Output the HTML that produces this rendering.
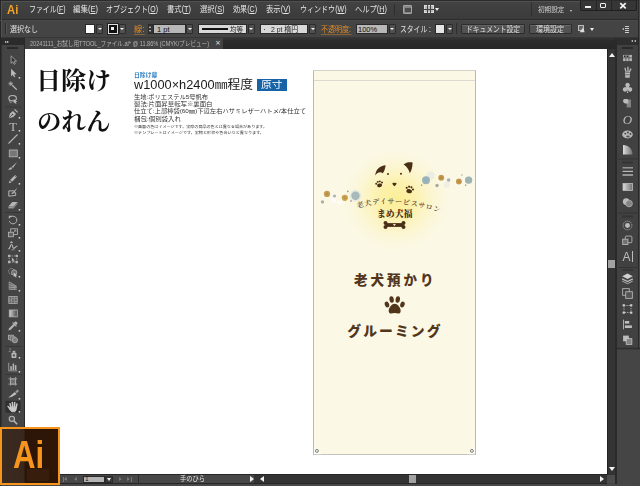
<!DOCTYPE html>
<html lang="ja">
<head>
<meta charset="utf-8">
<title>Illustrator</title>
<style>
*{margin:0;padding:0;box-sizing:border-box}
html,body{width:640px;height:486px;overflow:hidden;background:#454545}
body{position:relative;font-family:"Liberation Sans","Noto Sans CJK JP",sans-serif;color:#ddd}
.a{position:absolute}
.t{position:absolute;white-space:nowrap;line-height:1}
#menubar{left:0;top:0;width:640px;height:20px;background:linear-gradient(#434343,#3b3b3b);border-bottom:1px solid #2b2b2b}
#ctrl{left:0;top:20px;width:640px;height:18px;background:#444}
#strip{left:0;top:36.5px;width:640px;height:12.5px;background:linear-gradient(#383838,#2c2c2c 30%,#272727)}
#tab{left:25px;top:38px;width:198px;height:11px;background:#424242}
#tools{left:0;top:38px;width:25px;height:448px;background:#444;border-right:1px solid #282828;border-left:2px solid #323232}
#toolshead{left:0;top:38px;width:24px;height:7px;background:#2b2b2b}
#canvas{left:25px;top:49px;width:582px;height:425px;background:#fff}
#vscroll{left:606.5px;top:49px;width:8.5px;height:426px;background:#343434;border-left:1px solid #222}
#gap{left:615px;top:38px;width:2px;height:448px;background:#2a2a2a}
#rpanel{left:617px;top:38px;width:23px;height:448px;background:#414141}
#rhead{left:617px;top:38px;width:23px;height:7px;background:#2e2e2e}
#status{left:60px;top:474px;width:547px;height:10px;background:#333;border-top:1px solid #262626;border-bottom:1px solid #262626}
#bottom{left:0;top:484px;width:640px;height:2px;background:#484848}
.mi{top:5px;font-size:8.5px;color:#e6e6e6}
.ci{font-size:8.3px;color:#e2e2e2}
.dd{position:absolute;width:7px;height:10.5px;top:23.5px;background:#505050;border:1px solid #2c2c2c;border-radius:1px}
.dd:after{content:"";position:absolute;left:0.5px;top:3.2px;border-left:2px solid transparent;border-right:2px solid transparent;border-top:2.6px solid #f4f4f4}
.fld{position:absolute;top:24px;height:10px;background:#d8d8d8;border:1px solid #2a2a2a}
.btn{position:absolute;top:24px;height:10px;background:#525252;border:1px solid #2c2c2c;border-radius:1px;box-shadow:inset 0 1px 0 #666}
.or{color:#e08a28;border-bottom:1px solid rgba(224,138,40,.45)}
.inf{font-size:5.7px;color:#2e2e2e}
.inf2{font-size:3.7px;color:#2e2e2e}
</style>
</head>
<body>
<div class="a" id="menubar"></div>
<div class="a" id="ctrl"></div>
<div class="a" id="strip"></div>
<div class="a" id="tab"></div>
<div class="a" id="canvas"></div>
<div class="a" id="tools"></div>
<div class="a" id="toolshead"></div>
<div class="a" id="vscroll"></div>
<div class="a" id="gap"></div>
<div class="a" id="rpanel"></div>
<div class="a" id="rhead"></div>
<div class="a" id="status"></div>
<div class="a" id="bottom"></div>

<!-- MENU -->
<div class="t" style="transform:scaleX(0.869);transform-origin:0 0;left:6.8px;top:3px;font-size:13px;font-weight:bold;color:#f3a326">Ai</div>
<div class="t mi" style="transform:scaleX(0.813);transform-origin:0 0;left:28.5px">ファイル(<u>F</u>)</div>
<div class="t mi" style="transform:scaleX(0.882);transform-origin:0 0;left:73px">編集(<u>E</u>)</div>
<div class="t mi" style="transform:scaleX(0.821);transform-origin:0 0;left:106px">オブジェクト(<u>O</u>)</div>
<div class="t mi" style="transform:scaleX(0.861);transform-origin:0 0;left:167px">書式(<u>T</u>)</div>
<div class="t mi" style="transform:scaleX(0.864);transform-origin:0 0;left:200px">選択(<u>S</u>)</div>
<div class="t mi" style="transform:scaleX(0.833);transform-origin:0 0;left:233px">効果(<u>C</u>)</div>
<div class="t mi" style="transform:scaleX(0.864);transform-origin:0 0;left:265.5px">表示(<u>V</u>)</div>
<div class="t mi" style="transform:scaleX(0.827);transform-origin:0 0;left:299.5px">ウィンドウ(<u>W</u>)</div>
<div class="t mi" style="transform:scaleX(0.857);transform-origin:0 0;left:355px">ヘルプ(<u>H</u>)</div>
<div class="a" style="left:394px;top:4px;width:1px;height:11px;background:#2e2e2e"></div>
<div class="a" style="left:403px;top:5px;width:9px;height:8.5px;background:#858585;border:1px solid #a4a4a4;border-radius:1px"></div>
<div class="a" style="left:404.5px;top:7.5px;width:6px;height:4.5px;background:#4c4c4c"></div>
<div class="a" style="left:424px;top:5px;width:10px;height:8px;background:#bbb;border:1px solid #ddd"></div>
<div class="a" style="left:427px;top:5px;width:1px;height:8px;background:#444"></div>
<div class="a" style="left:430px;top:5px;width:1px;height:8px;background:#444"></div>
<div class="a" style="left:424px;top:9px;width:10px;height:1px;background:#444"></div>
<div class="a" style="left:435px;top:8px;border-left:2px solid transparent;border-right:2px solid transparent;border-top:3px solid #eee"></div>
<div class="t" style="transform:scaleX(0.946);transform-origin:0 0;left:538px;top:6px;font-size:7px;color:#ccc">初期設定</div>
<div class="a" style="left:569.5px;top:10px;border-left:1.5px solid transparent;border-right:1.5px solid transparent;border-top:2.5px solid #ccc"></div>
<div class="a" style="left:580px;top:0;width:57px;height:10.5px;background:#363636;border:1px solid #1f1f1f;border-top:none;border-radius:0 0 2.5px 2.5px"></div>
<div class="a" style="left:595.5px;top:0;width:1px;height:10px;background:#232323"></div>
<div class="a" style="left:610.5px;top:0;width:1px;height:10px;background:#232323"></div>
<div class="a" style="left:585.3px;top:6px;width:5.5px;height:2px;background:#f0f0f0"></div>
<div class="a" style="left:600px;top:3.3px;width:6px;height:4.7px;border:1.3px solid #f0f0f0;border-top-width:1.8px;border-radius:1px"></div>
<svg class="a" style="left:619px;top:2px" width="8" height="8" viewBox="0 0 8 8"><path d="M1.300 1.200L6.700 6.300M6.700 1.200L1.300 6.300" stroke="#f4f4f4" stroke-width="1.700"/></svg>
<!-- window border -->
<div class="a" style="left:0;top:0;width:640px;height:1px;background:#2b2b2b"></div>
<div class="a" style="left:0;top:1px;width:580px;height:1px;background:#505050"></div>
<div class="a" style="left:0;top:0;width:1px;height:486px;background:#262626"></div>
<div class="a" style="left:1px;top:1px;width:1px;height:36px;background:#525252"></div>
<div class="a" style="left:637.5px;top:0;width:1.5px;height:486px;background:#2a2a2a"></div>
<div class="a" style="left:639px;top:0;width:1px;height:486px;background:#4a4a4a"></div>
<div class="a" style="left:0;top:20px;width:637px;height:1px;background:#4a4a4a"></div>

<!-- CONTROL BAR -->
<div class="a" style="left:5px;top:23px;width:2px;height:11px;background:#2c2c2c;border-right:1px solid #555"></div>
<div class="t ci" style="transform:scaleX(0.843);transform-origin:0 0;left:10px;top:25.3px">選択なし</div>
<div class="a" style="left:85px;top:23.5px;width:10px;height:10px;background:#fff;border:1px solid #2a2a2a"></div>
<div class="dd" style="left:96px"></div>
<div class="a" style="left:107.5px;top:23.5px;width:10px;height:10px;background:#111;border:1px solid #ddd;outline:1px solid #222"></div>
<div class="a" style="left:110px;top:26px;width:5px;height:5px;background:#eee;border:1px solid #111"></div>
<div class="dd" style="left:118.5px"></div>
<div class="t ci or" style="transform:scaleX(0.990);transform-origin:0 0;left:134px;top:25.3px">線:</div>
<div class="a" style="left:147.5px;top:24px;width:6px;height:10px;background:#333;border:1px solid #2a2a2a"></div>
<div class="a" style="left:149px;top:25.5px;border-left:1.5px solid transparent;border-right:1.5px solid transparent;border-bottom:2.5px solid #ddd"></div>
<div class="a" style="left:149px;top:30px;border-left:1.5px solid transparent;border-right:1.5px solid transparent;border-top:2.5px solid #ddd"></div>
<div class="fld" style="left:153px;width:33px;background:#b8b8b8"></div>
<div class="t" style="left:157px;top:25.5px;font-size:7.5px;color:#111">1 pt</div>
<div class="dd" style="left:186px"></div>
<div class="fld" style="left:197.5px;width:49px"></div>
<div class="a" style="left:202px;top:28px;width:26px;height:1.5px;background:#111"></div>
<div class="t" style="transform:scaleX(0.929);transform-origin:0 0;left:230px;top:25.5px;font-size:7px;color:#222">均等</div>
<div class="dd" style="left:247.5px"></div>
<div class="fld" style="left:260px;width:48px"></div>
<div class="a" style="left:263.5px;top:28.5px;width:1.5px;height:1.5px;background:#222;border-radius:1px"></div>
<div class="t" style="transform:scaleX(0.912);transform-origin:0 0;left:271px;top:25.5px;font-size:7.5px;color:#222">2 pt 楕円</div>
<div class="dd" style="left:309px"></div>
<div class="t ci or" style="transform:scaleX(0.845);transform-origin:0 0;left:321px;top:25.3px">不透明度:</div>
<div class="fld" style="left:355.5px;width:32.5px;background:#b8b8b8"></div>
<div class="t" style="left:358px;top:25.5px;font-size:7.5px;color:#111">100%</div>
<div class="dd" style="left:388.5px"></div>
<div class="t ci" style="transform:scaleX(0.820);transform-origin:0 0;left:399.5px;top:25.3px">スタイル :</div>
<div class="a" style="left:435px;top:23.5px;width:10px;height:10px;background:#e6e6e6;border:1px solid #2a2a2a"></div>
<div class="dd" style="left:446px"></div>
<div class="btn" style="left:461px;width:63.5px"></div>
<div class="a" style="left:456px;top:23px;width:1px;height:11px;background:#2e2e2e"></div>
<div class="a" style="left:531px;top:2px;width:1px;height:14px;background:#303030"></div>
<div class="t ci" style="transform:scaleX(0.813);transform-origin:0 0;left:465.5px;top:25.3px;color:#ddd">ドキュメント設定</div>
<div class="btn" style="left:528.5px;width:43px"></div>
<div class="t ci" style="transform:scaleX(0.843);transform-origin:0 0;left:536px;top:25.3px;color:#ddd">環境設定</div>
<div class="a" style="left:578px;top:25px;width:6px;height:6px;border:1px solid #bbb;background:#666"></div>
<div class="a" style="left:581px;top:28px;border-top:3px solid transparent;border-bottom:3px solid transparent;border-left:4px solid #ddd;transform:rotate(35deg)"></div>
<div class="a" style="left:590px;top:28px;border-left:2px solid transparent;border-right:2px solid transparent;border-top:3px solid #eee"></div>
<div class="a" style="left:621.5px;top:28px;border-top:1.5px solid transparent;border-bottom:1.5px solid transparent;border-right:2.5px solid #ccc"></div>
<div class="a" style="left:625px;top:26px;width:4px;height:1px;background:#ccc;box-shadow:0 2px 0 #ccc,0 4px 0 #ccc,0 6px 0 #ccc"></div>

<!-- TAB -->
<div class="t" style="transform:scaleX(0.858);transform-origin:0 0;left:30px;top:40.5px;font-size:6.5px;color:#b4b4b4;filter:blur(0.3px)">20241111_お試し用TTOOL_ファイル.ai* @ 11.86% (CMYK/プレビュー)</div>
<div class="t" style="left:215px;top:40px;font-size:7px;color:#e6e6e6;font-family:'DejaVu Sans',sans-serif">×</div>
<div class="a" style="left:4.5px;top:40.5px;border-top:1.5px solid transparent;border-bottom:1.5px solid transparent;border-left:2px solid #ddd"></div>
<div class="a" style="left:7px;top:40.5px;border-top:1.5px solid transparent;border-bottom:1.5px solid transparent;border-left:2px solid #ddd"></div>
<div class="a" style="left:7px;top:47px;width:11px;height:2px;background:#2a2a2a"></div>
<div class="a" style="left:634px;top:40px;border-top:1.5px solid transparent;border-bottom:1.5px solid transparent;border-right:2px solid #ddd"></div>
<div class="a" style="left:631px;top:40px;border-top:1.5px solid transparent;border-bottom:1.5px solid transparent;border-right:2px solid #ddd"></div>
<div class="a" style="left:622px;top:47px;width:11px;height:2px;background:#2a2a2a"></div>

<!-- ARTBOARD -->
<div class="a" id="banner" style="left:313px;top:70px;width:162.5px;height:385.3px;background:#fbf8e5;border:1px solid #b9b9b4;border-top-color:#d2d2c8;border-bottom-color:#c4c4be"></div>
<div class="a" style="left:314px;top:80px;width:161px;height:1px;background:#dcdad0"></div>

<svg class="a" style="left:300px;top:60px" width="200" height="400" viewBox="300 60 200 400">
<defs>
<radialGradient id="glow" cx="0.5" cy="0.5" r="0.5"><stop offset="0" stop-color="#fcee96"/><stop offset="0.3" stop-color="#fcf0a4" stop-opacity="0.9"/><stop offset="0.6" stop-color="#fcf3bc" stop-opacity="0.5"/><stop offset="0.85" stop-color="#fbf6d4" stop-opacity="0.15"/><stop offset="1" stop-color="#fbf8e5" stop-opacity="0"/></radialGradient>
<path id="arc" d="M357.500,208.200 Q392,197.600 440.500,212.800"/>
</defs>
<ellipse cx="396" cy="200" rx="60" ry="56" fill="url(#glow)"/>
<!-- bubbles left -->
<circle cx="355.500" cy="195.800" r="6" fill="#e3e8e1" opacity="0.8"/>
<circle cx="333.700" cy="200" r="2.600" fill="#fff" opacity="0.7"/>
<circle cx="340" cy="202.500" r="2.200" fill="#fff" opacity="0.6"/>
<circle cx="327" cy="193.900" r="3.100" fill="#c49c55"/><circle cx="327" cy="193.900" r="1.400" fill="#b88f49"/>
<circle cx="334.500" cy="196" r="1.600" fill="#a9b5b3"/>
<circle cx="322.500" cy="201.900" r="1.600" fill="#a8aaa0"/>
<circle cx="344.800" cy="197.800" r="3.100" fill="#c9a24f"/><circle cx="344.800" cy="197.800" r="1.400" fill="#bd9444"/>
<circle cx="347.800" cy="191.400" r="0.900" fill="#9d9da4"/>
<circle cx="355.500" cy="195.800" r="4.200" fill="#a7b9b8"/>
<circle cx="351" cy="201" r="0.800" fill="#8d7f72"/>
<!-- bubbles right -->
<circle cx="430.500" cy="175.500" r="4" fill="#e6ebe6" opacity="0.8"/>
<circle cx="446.900" cy="184.800" r="3" fill="#ecece4" opacity="0.8"/>
<circle cx="426" cy="180.200" r="4" fill="#9db3b8"/><circle cx="426" cy="180.200" r="1.800" fill="#8fb0bd"/>
<circle cx="441.200" cy="177.800" r="3.700" fill="#fff" opacity="0.7"/><circle cx="441.200" cy="177.800" r="3" fill="#c59a4a"/><circle cx="441.200" cy="177.800" r="1.400" fill="#b98a3e"/>
<circle cx="437" cy="185.500" r="1.700" fill="#a8a89c"/>
<circle cx="448.600" cy="180" r="1.800" fill="#a9b0b0"/>
<circle cx="458.900" cy="181.600" r="3.800" fill="#fff" opacity="0.7"/><circle cx="458.900" cy="181.600" r="3" fill="#c79a4c"/><circle cx="458.900" cy="181.600" r="1.400" fill="#ba8c40"/>
<circle cx="468.600" cy="180.200" r="3.600" fill="#9eb3b6"/>
<circle cx="461.900" cy="175" r="0.800" fill="#a9a3ad"/>
<circle cx="421.600" cy="185.100" r="0.700" fill="#6b6256"/>
<circle cx="465.600" cy="185.100" r="0.700" fill="#6b6256"/>
<!-- dog -->
<g fill="#4a2f17">
<path d="M375.200,175.400 C375.800,169.300 380,165.800 385.600,165.300 C385.200,169 384.200,171.500 382.800,173.300 C380.300,171.300 377.500,172.300 375.200,175.400z"/>
<path d="M403.600,164.400 C406.500,162 409.800,161.800 412.600,162.600 C412.500,167.300 411.500,170.800 409.800,173.300 C409,169.700 407,166.700 403.600,164.400z"/>
<circle cx="388" cy="174" r="1"/><circle cx="401" cy="173.700" r="1"/>
<path d="M392.300,183 Q394.400,182.300 396.600,183 Q396.300,185.300 394.400,186.300 Q392.600,185.300 392.300,183z"/>
<!-- left paw -->
<g transform="translate(379.300,184) rotate(-12) scale(1.1)"><ellipse cx="0" cy="1.300" rx="2.300" ry="1.700"/><circle cx="-2.700" cy="-0.800" r="0.900"/><circle cx="-1" cy="-2.200" r="0.900"/><circle cx="1" cy="-2.200" r="0.900"/><circle cx="2.700" cy="-0.800" r="0.900"/></g>
<!-- right paw -->
<g transform="translate(409.600,189.600) rotate(15) scale(1.08)"><ellipse cx="0" cy="1.500" rx="2.600" ry="1.900"/><circle cx="-3" cy="-0.900" r="1"/><circle cx="-1.100" cy="-2.500" r="1"/><circle cx="1.100" cy="-2.500" r="1"/><circle cx="3" cy="-0.900" r="1"/></g>
<!-- bone -->
<rect x="385.500" y="223.100" width="18" height="3.800"/><circle cx="385.500" cy="223" r="2"/><circle cx="385.500" cy="227" r="2"/><circle cx="403.500" cy="223" r="2"/><circle cx="403.500" cy="227" r="2"/>
</g>
<path d="M394.400,226 l-1.200,-1.200 a0.650,0.650 0 0 1 1.200,-0.600 a0.650,0.650 0 0 1 1.200,0.600z" fill="#f6e9d8"/>
<text font-family="'Liberation Serif','Noto Serif CJK SC',serif" font-size="7.200" font-weight="600" fill="#5e4d3e"><textPath href="#arc" textLength="83.500" lengthAdjust="spacing">老犬デイサービスサロン</textPath></text>
<text x="376.900" y="217.300" font-family="'Liberation Serif','Noto Serif CJK SC',serif" font-weight="900" font-size="9" fill="#4a2f17" textLength="35.500" lengthAdjust="spacingAndGlyphs">まめ犬福</text>
<circle cx="402.300" cy="210.200" r="0.800" fill="#d8452e"/>
<text x="354" y="284.900" font-family="'Liberation Sans','Noto Sans CJK JP',sans-serif" font-weight="900" font-size="13.500" fill="#52361c" textLength="79.500" lengthAdjust="spacing">老犬預かり</text>
<text x="347.300" y="336.300" font-family="'Liberation Sans','Noto Sans CJK JP',sans-serif" font-weight="900" font-size="13.800" fill="#52361c" textLength="93.200" lengthAdjust="spacing">グルーミング</text>
<!-- big paw -->
<g fill="#52361c" transform="translate(394.700,305.600) scale(1.06,1.17)"><path d="M0,-1.500 C3,-1.500 6.500,3 5.500,5.500 C4.500,7.800 2,6.300 0,6.300 C-2,6.300 -4.500,7.800 -5.500,5.500 C-6.500,3 -3,-1.500 0,-1.500z"/><ellipse cx="-7.300" cy="-1" rx="2" ry="2.600" transform="rotate(-25 -7.300 -1)"/><ellipse cx="-2.900" cy="-5.200" rx="2.100" ry="2.800" transform="rotate(-8 -2.900 -5.200)"/><ellipse cx="2.900" cy="-5.200" rx="2.100" ry="2.800" transform="rotate(8 2.900 -5.200)"/><ellipse cx="7.300" cy="-1" rx="2" ry="2.600" transform="rotate(25 7.300 -1)"/></g>
<!-- grommets -->
<path d="M314,446 L322,454.300 L314,454.300z" fill="#fdfcf2" opacity="0.8"/><path d="M474.800,446 L466.800,454.300 L474.800,454.300z" fill="#fdfcf2" opacity="0.8"/>
<g fill="#e9e9e4" stroke="#858582" stroke-width="1"><circle cx="316.900" cy="450.900" r="1.500"/><circle cx="471.900" cy="450.900" r="1.500"/></g>
</svg>

<!-- TOP LEFT TEXT -->
<div class="t" style="transform:scaleX(1.043);transform-origin:0 0;left:36.2px;top:68.7px;font-size:24px;font-weight:bold;color:#111;font-family:'Liberation Serif','Noto Serif CJK SC',serif">日除け</div>
<div class="t" style="transform:scaleX(1.019);transform-origin:0 0;left:37.4px;top:110px;font-size:24px;font-weight:bold;color:#111;font-family:'Liberation Serif','Noto Serif CJK SC',serif">のれん</div>
<div class="t" style="transform:scaleX(1.132);transform-origin:0 0;left:134.3px;top:72.7px;font-size:5.2px;font-weight:bold;color:#2a7cc2">日除け幕</div>
<div class="t" style="transform:scaleX(1.039);transform-origin:0 0;left:134.3px;top:79.3px;font-size:12.3px;color:#1a1a1a">w1000×h2400㎜程度</div>
<div class="a" style="left:256.5px;top:79px;width:30.5px;height:11.5px;background:#1763a8"></div>
<div class="t" style="transform:scaleX(1.131);transform-origin:0 0;left:261px;top:80px;font-size:9.5px;color:#fff">原寸</div>
<div class="t inf" style="transform:scaleX(1.099);transform-origin:0 0;left:134px;top:95px">生地:ポリエステル5号帆布</div>
<div class="t inf" style="transform:scaleX(1.124);transform-origin:0 0;left:134px;top:102.3px">製法:片面昇華転写※裏面白</div>
<div class="t inf" style="transform:scaleX(1.106);transform-origin:0 0;left:134px;top:109.2px">仕立て:上部棒袋(60㎜)下辺左右ハサミレザーハトメ/本仕立て</div>
<div class="t inf" style="transform:scaleX(1.135);transform-origin:0 0;left:134px;top:116.8px">梱包:個別袋入れ</div>
<div class="t inf2" style="transform:scaleX(1.100);transform-origin:0 0;left:134px;top:126.2px">※画面の色はイメージです。実際の商品の色とは異なる場合があります。</div>
<div class="t inf2" style="transform:scaleX(1.110);transform-origin:0 0;left:134px;top:132.1px">※テンプレートはイメージです。実物と形状や色合いなど異なります。</div>

<!-- SCROLLBARS -->
<div class="a" style="left:608.5px;top:52.5px;border-left:3px solid transparent;border-right:3px solid transparent;border-bottom:4px solid #f2f2f2"></div>
<div class="a" style="left:608.5px;top:466.5px;border-left:3px solid transparent;border-right:3px solid transparent;border-top:4px solid #f2f2f2"></div>
<div class="a" style="left:607.5px;top:260px;width:7px;height:8px;background:#a2a2a2"></div>
<div class="a" style="left:607px;top:475px;width:8px;height:8px;background:#4c4c4c"></div>
<!-- STATUS -->
<div class="a" style="left:60px;top:475px;width:194px;height:8px;background:#474747"></div>
<div class="a" style="left:62.5px;top:476.5px;width:1px;height:5px;background:#777"></div>
<div class="a" style="left:64px;top:476.5px;border-top:2.5px solid transparent;border-bottom:2.5px solid transparent;border-right:3.5px solid #777"></div>
<div class="a" style="left:74px;top:476.5px;border-top:2.5px solid transparent;border-bottom:2.5px solid transparent;border-right:3.5px solid #777"></div>
<div class="a" style="left:83px;top:475.5px;width:22px;height:7.5px;background:#b4b4b4;border:1px solid #2a2a2a"></div>
<div class="t" style="left:85px;top:476px;font-size:6.5px;color:#111">1</div>
<div class="a" style="left:105px;top:475.5px;width:8px;height:7.5px;background:#3a3a3a;border:1px solid #2a2a2a"></div>
<div class="a" style="left:107px;top:478px;border-left:2px solid transparent;border-right:2px solid transparent;border-top:3px solid #eee"></div>
<div class="a" style="left:118.500px;top:476.5px;border-top:2.5px solid transparent;border-bottom:2.5px solid transparent;border-left:3.5px solid #777"></div>
<div class="a" style="left:127px;top:476.5px;border-top:2.5px solid transparent;border-bottom:2.5px solid transparent;border-left:3.5px solid #777"></div>
<div class="a" style="left:131px;top:476.5px;width:1px;height:5px;background:#777"></div>
<div class="a" style="left:137.5px;top:475px;width:1px;height:8px;background:#2e2e2e"></div>
<div class="t" style="transform:scaleX(0.920);transform-origin:0 0;left:179.5px;top:475.8px;font-size:6.8px;color:#e4e4e4">手のひら</div>
<div class="a" style="left:249.5px;top:476px;border-top:3px solid transparent;border-bottom:3px solid transparent;border-left:4px solid #f2f2f2"></div>
<div class="a" style="left:260px;top:476px;border-top:3px solid transparent;border-bottom:3px solid transparent;border-right:4px solid #f2f2f2"></div>
<div class="a" style="left:599.5px;top:476px;border-top:3px solid transparent;border-bottom:3px solid transparent;border-left:4px solid #f2f2f2"></div>
<div class="a" style="left:408.5px;top:475px;width:7.5px;height:8px;background:#a2a2a2"></div>
<svg class="a" style="left:0;top:0;opacity:.85" width="30" height="486" viewBox="0 0 30 486" fill="none" stroke="none">
<rect x="5.400" y="400.800" width="15.200" height="12" rx="1" fill="#2d2d2d"/>
<g fill="#f4f4f4">
<!-- corner dots -->
<rect x="18.700" y="77.05" width="1.500" height="1.500"/><rect x="18.700" y="117.05" width="1.500" height="1.500"/><rect x="18.700" y="143.05" width="1.500" height="1.500"/><rect x="18.700" y="157.05" width="1.500" height="1.500"/><rect x="18.700" y="183.05" width="1.500" height="1.500"/><rect x="18.700" y="209.05" width="1.500" height="1.500"/><rect x="18.700" y="224.05" width="1.500" height="1.500"/><rect x="18.700" y="237.05" width="1.500" height="1.500"/><rect x="18.700" y="250.05" width="1.500" height="1.500"/><rect x="18.700" y="276.05" width="1.500" height="1.500"/><rect x="18.700" y="290.05" width="1.500" height="1.500"/><rect x="18.700" y="330.05" width="1.500" height="1.500"/><rect x="18.700" y="357.05" width="1.500" height="1.500"/><rect x="18.700" y="371.05" width="1.500" height="1.500"/><rect x="18.700" y="398.05" width="1.500" height="1.500"/><rect x="18.700" y="411.05" width="1.500" height="1.500"/><rect x="18.700" y="130.05" width="1.500" height="1.500"/>
</g>
<!-- separators -->
<g fill="#363636"><rect x="5" y="106.5" width="17" height="1"/><rect x="5" y="212" width="17" height="1"/><rect x="5" y="346" width="17" height="1"/><rect x="5" y="374" width="17" height="1"/></g>
<!-- hand selected bg -->

<!-- 1 selection (hollow arrow) -->
<g transform="translate(13,60) scale(0.76)"><path d="M-2.5-5.5l0 10 2.3-2.2 1.6 3.4 1.6-.8-1.6-3.3 3.3-.1z" fill="#2f2f2f" stroke="#c9c9c9" stroke-width="1"/></g>
<!-- 2 direct selection (solid arrow) -->
<g transform="translate(13,73) scale(0.76)"><path d="M-2.5-5.5l0 10 2.3-2.2 1.6 3.4 1.6-.8-1.6-3.3 3.3-.1z" fill="#d2d2d2"/></g>
<!-- 3 magic wand -->
<g transform="translate(13,86) scale(0.76)" stroke="#c9c9c9"><path d="M-1-1l6 6" stroke-width="1.6"/><path d="M-3-6l0 6M-6-3l6 0M-5-5l4 4M-1-5l-4 4" stroke-width="1"/></g>
<!-- 4 lasso -->
<g transform="translate(13,99) scale(0.76)"><ellipse cx="-0.5" cy="-1" rx="5" ry="3.5" stroke="#c9c9c9" stroke-width="1.4"/><path d="M1 0l0 6 1.5-1.5 1.2 2 1-.5-1.1-2 2.2 0z" fill="#d2d2d2"/><path d="M-4 2c-1 2 0 3 2 3" stroke="#c9c9c9" stroke-width="1"/></g>
<!-- 5 pen -->
<g transform="translate(13,114) scale(0.76)"><path d="M-5.5 5.5l1.5-6 4-3.5 4 4-3.5 4z" fill="#c9c9c9"/><path d="M1.5-5.5l4 4 1.2-1.2-4-4z" fill="#c9c9c9"/><path d="M-5 5l4-4" stroke="#3a3a3a" stroke-width="0.9"/><circle cx="-0.6" cy="0.6" r="1" fill="#3a3a3a"/></g>
<!-- 6 type -->
<text x="13" y="130.5" font-family="Liberation Serif,serif" font-size="12.5" fill="#d2d2d2" text-anchor="middle">T</text>
<!-- 7 line -->
<path d="M8.5 143.5l9-9" stroke="#c9c9c9" stroke-width="1.1"/>
<!-- 8 rect -->
<rect x="9.3" y="150" width="8" height="6.800" fill="#808080" stroke="#c0c0c0" stroke-width="0.9"/>
<!-- 9 paintbrush -->
<g transform="translate(13,166) scale(0.76)"><path d="M5.5-5.5l-7 6.5 1.5 1.5z" fill="#c9c9c9"/><path d="M-2 1.5c-2 0-2.5 2-4.5 3 2.5 1 5 0 5.500-2z" fill="#c9c9c9"/></g>
<!-- 10 pencil -->
<g transform="translate(13,179) scale(0.76)"><path d="M-5.500 5.500l1-3.500 2.500 2.500z" fill="#c9c9c9"/><path d="M-3.800 1.200l6.500-6.500 2.500 2.500-6.500 6.500z" fill="#c9c9c9"/><path d="M2-4.500l2.500 2.500" stroke="#444" stroke-width="0.8"/></g>
<!-- 11 blob brush -->
<g transform="translate(13,192) scale(0.76)"><path d="M-5.500-1.500l7 0 0 2.500 2 0 0 3.500-9 1z" fill="none" stroke="#c9c9c9" stroke-width="1.3"/><path d="M6-6l-5 5 1.200 1.200z" fill="#c9c9c9"/><path d="M0.500 0c-1.500 0-2 1.500-3 2 2 .8 3.500 0 4-1z" fill="#c9c9c9"/></g>
<!-- 12 eraser -->
<g transform="translate(13,205) scale(0.76)"><path d="M-6 2l5-6 7 0-5 6z" fill="#c9c9c9"/><path d="M-6 2l0 2.500 7 0 0-2.500z" fill="#a8a8a8"/><path d="M1 4.500l5-6 0-2.500-5 6z" fill="#8e8e8e"/></g>
<!-- 13 rotate -->
<g transform="translate(13,220) scale(0.76)"><path d="M-2.500-4.300a5 5 0 1 1-2.300 5.800" stroke="#c9c9c9" stroke-width="1.300" stroke-dasharray="none"/><path d="M-5.500-5.500l4.500 0-4.500 4z" fill="#c9c9c9"/></g>
<!-- 14 scale -->
<g transform="translate(13,233) scale(0.76)" stroke="#c9c9c9" stroke-width="1.100"><rect x="-3" y="-5.500" width="9" height="7.500"/><rect x="-6" y="-1" width="6.500" height="6" fill="#666"/><path d="M0 0l3.500-3.500M1.500-3.800l2.300 0 0 2.300" stroke-width="0.900"/></g>
<!-- 15 width -->
<g transform="translate(13,246) scale(0.76)"><path d="M-6 4c3-1 2-6 4-6 2 0 1 5 3 5 2 0 2-3 5-3" stroke="#c9c9c9" stroke-width="1.500"/><path d="M-4-5c1 1 3 1 4 0M-2 5.500c1-1 3-1 4 0" stroke="#c9c9c9" stroke-width="1"/><circle cx="-2" cy="-5" r="1.100" fill="#c9c9c9"/></g>
<!-- 16 free transform -->
<g transform="translate(13,259) scale(0.76)"><rect x="-5" y="-4" width="10" height="8" stroke="#c9c9c9" stroke-width="1" stroke-dasharray="2 1.200"/><path d="M-6.500-5.500l3 0 0 3-3 0zM3.500-5.500l3 0 0 3-3 0zM-6.500 2.500l3 0 0 3-3 0zM3.500 2.500l3 0 0 3-3 0z" fill="#c9c9c9"/><path d="M-1.500-2l0 5.500 1.300-1.200 1 2 .9-.4-1-2 1.800 0z" fill="#c9c9c9"/></g>
<!-- 17 shape builder -->
<g transform="translate(13,272.500) scale(0.76)"><circle cx="-2" cy="-1.500" r="3.800" stroke="#c9c9c9" stroke-width="1" stroke-dasharray="1.500 1"/><circle cx="1.500" cy="0" r="3.500" stroke="#c9c9c9" stroke-width="1" fill="#777"/><path d="M1 0l0 6 1.500-1.500 1.200 2.200 1-.5-1.100-2.200 2.200 0z" fill="#e0e0e0"/></g>
<!-- 18 perspective grid -->
<g transform="translate(13,286) scale(0.76)" stroke="#c9c9c9" stroke-width="0.900"><path d="M-5-5.500l0 10M-2.500-4l0 8.500M0-2.500l0 7M2.500-1l0 5.500M-5-5.500l10 6M-5-2l10 3.500M-5 1.500l10 1M-5 4.500l10 0"/></g>
<!-- 19 mesh -->
<g transform="translate(13,300) scale(0.76)" stroke="#c9c9c9" stroke-width="1"><rect x="-5.500" y="-4.500" width="11" height="9" fill="#6a6a6a"/><path d="M-5.500-1.500c3 1.500 7-1.500 11 0M-5.500 1.500c3-1.500 7 1.500 11 0M-2-4.500c1.500 3-1.500 6 0 9M2-4.500c-1.500 3 1.500 6 0 9" stroke-dasharray="1.500 1"/></g>
<!-- 20 gradient -->
<defs><linearGradient id="gl" x1="0" x2="1"><stop offset="0" stop-color="#e8e8e8"/><stop offset="1" stop-color="#4a4a4a"/></linearGradient></defs>
<rect x="9.3" y="310" width="8" height="6.800" fill="url(#gl)" stroke="#c0c0c0" stroke-width="0.9"/>
<!-- 21 eyedropper -->
<g transform="translate(13,326) scale(0.76)"><path d="M-6 6l1-3 5.500-5.500 2 2-5.500 5.500z" fill="#c9c9c9"/><path d="M1-4l1.500-1.500c1.500-1.500 4.500 1.500 3 3l-1.500 1.500z" fill="#c9c9c9"/><path d="M-0.500-4.500l5 5" stroke="#c9c9c9" stroke-width="1.500"/></g>
<!-- 22 blend -->
<g transform="translate(13,339) scale(0.76)" stroke="#c9c9c9" stroke-width="1"><rect x="-6" y="-5" width="6.500" height="5.500" fill="#777"/><rect x="-3.500" y="-3" width="6.500" height="5.500" fill="#777" stroke-dasharray="1.500 1"/><circle cx="2.500" cy="1.500" r="3.500" fill="#8a8a8a"/></g>
<!-- 23 symbol sprayer -->
<g transform="translate(13,353.500) scale(0.76)"><rect x="-2" y="-1" width="6.500" height="7" rx="1" fill="#c9c9c9"/><rect x="-0.500" y="-3.500" width="3.500" height="2.500" fill="#c9c9c9"/><circle cx="1.200" cy="2.500" r="1.500" fill="#555"/><path d="M-3-4l-1.500-1M-3.500-2.500l-2 0M-3-5.500l-1-1.500" stroke="#c9c9c9" stroke-width="0.900"/></g>
<!-- 24 graph -->
<g transform="translate(13,367) scale(0.76)" fill="#c9c9c9"><path d="M-6-5.500l1 0 0 10 10.500 0 0 1-11.500 0z"/><rect x="-3.500" y="-1" width="2" height="5"/><rect x="-0.500" y="-4.500" width="2" height="8.500"/><rect x="2.500" y="-2.500" width="2" height="6.500"/></g>
<!-- 25 artboard -->
<g transform="translate(13,381.500) scale(0.76)" stroke="#c9c9c9" stroke-width="1"><rect x="-3.500" y="-3.500" width="7" height="7" fill="#777"/><path d="M-6-3.500l12 0M-6 3.500l12 0M-3.500-6l0 12M3.500-6l0 12" stroke-dasharray="1.500 1"/></g>
<!-- 26 slice -->
<g transform="translate(13,394.500)"><path d="M-4.800 3.300L1.800-2.600L3.600-0.600L-1 2.200z" fill="#d4d4d4"/><path d="M2.300-3L4.600-5L6-3.400L3.900-1.200z" fill="#a8a8a8"/></g>
<!-- 27 hand -->
<g transform="translate(13.200,406.900)" stroke="#e2e2e2" stroke-linecap="round" fill="none"><path d="M-2.300 0.500L-3.200-3.200M-0.500-0.300L-0.900-4.500M1.300-0.300L1.500-4.300M3 0.500L3.700-2.800" stroke-width="1.500"/><path d="M-3.800 1.200L-5.200-0.500" stroke-width="1.400"/><path d="M-3 0L3.300 0.300L2.800 3.500L1.500 4.800L-1.500 4.800L-3.800 2.300z" fill="#e2e2e2" stroke-width="0.800"/></g>
<!-- 28 zoom -->
<g transform="translate(13,420) scale(0.76)"><circle cx="-1.500" cy="-1.500" r="3.500" stroke="#c9c9c9" stroke-width="1.400" fill="#5a5a5a"/><path d="M1.200 1.200l4.300 4.300" stroke="#c9c9c9" stroke-width="2"/></g>
</svg>

<svg class="a" style="left:610px;top:0;opacity:.9" width="30" height="486" viewBox="610 0 30 486" fill="none" stroke="none">
<!-- separators/grips -->
<g fill="#333"><rect x="618" y="158.500" width="21" height="1"/><rect x="622" y="161.500" width="11" height="2"/><rect x="618" y="212.500" width="21" height="1"/><rect x="622" y="215.500" width="11" height="2"/><rect x="618" y="267" width="21" height="1"/><rect x="622" y="269.500" width="11" height="1.500"/></g>
<rect x="617" y="349" width="23" height="137" fill="#464646"/>
<rect x="617" y="347.800" width="23" height="1.500" fill="#2c2c2c"/>
<!-- 1 swatches -->
<g transform="translate(627.500,58) scale(0.88)"><rect x="-5" y="-3.500" width="10" height="7" fill="#c4c4c4"/><path d="M-5-0.200l10 0M-1.800-3.500l0 7M1.600-3.500l0 7" stroke="#444" stroke-width="0.800"/><rect x="-4" y="-2.800" width="1.600" height="1.800" fill="#222"/><rect x="-0.800" y="-2.800" width="1.600" height="1.800" fill="#222"/></g>
<!-- 2 brushes -->
<g transform="translate(627.500,73) scale(0.88)"><path d="M-3-0.500l6 0-.5 6-5 0z" fill="#c6c6c6"/><path d="M-1.500-1l-1.500-5M0.500-1l0-6M2-1l2-4" stroke="#c6c6c6" stroke-width="1.500"/><path d="M-3 2l6 0" stroke="#555" stroke-width="0.800"/></g>
<!-- 3 symbols (club) -->
<text x="627.500" y="93" font-family="DejaVu Sans,sans-serif" font-size="14" fill="#c6c6c6" text-anchor="middle">♣</text>
<!-- 4 graphic styles -->
<g transform="translate(627.500,103.500) scale(0.88)"><rect x="-1" y="-4.500" width="5" height="9" fill="#8a8a8a"/><path d="M-5-3.500c0-2 6-2 6 0l0 3.500-3 0c-2 0-3-1.500-3-3.500z" fill="#cacaca"/></g>
<!-- 5 O italic -->
<text x="627.500" y="123.500" font-family="Liberation Serif,serif" font-size="13" font-style="italic" fill="#cacaca" text-anchor="middle">O</text>
<!-- 6 palette -->
<g transform="translate(627.500,134.500) scale(0.88)"><ellipse cx="0" cy="0" rx="6" ry="4.500" fill="#c6c6c6"/><circle cx="-2.500" cy="-1" r="1.100" fill="#444"/><circle cx="0.500" cy="-2.200" r="1.100" fill="#444"/><circle cx="3.300" cy="-0.500" r="1.100" fill="#444"/><ellipse cx="0.500" cy="2.200" rx="2" ry="1.200" fill="#555"/></g>
<!-- 7 color guide -->
<defs><linearGradient id="gr" x1="0" x2="1"><stop offset="0" stop-color="#eee"/><stop offset="1" stop-color="#777"/></linearGradient></defs>
<path d="M623 154.500l0-9.500c5.500 0 9.500 4 9.500 9.500z" fill="url(#gr)"/>
<!-- 8 stroke -->
<g fill="#c6c6c6"><rect x="622.500" y="167.300" width="10.500" height="1.100"/><rect x="622.500" y="170.800" width="10.500" height="1.200"/><rect x="622.500" y="174.300" width="10.500" height="1.400"/></g>
<!-- 9 gradient -->
<rect x="623" y="183.500" width="9.500" height="7" fill="url(#gr)" stroke="#ccc" stroke-width="0.800"/>
<!-- 10 transparency -->
<g transform="translate(627.500,202.500) scale(0.88)"><circle cx="-1.500" cy="-1" r="3.800" fill="#cacaca"/><circle cx="1.800" cy="1.200" r="3.800" fill="#8c8c8c" stroke="#ccc" stroke-width="0.700"/></g>
<!-- 11 appearance -->
<g transform="translate(627.500,225.500) scale(0.88)"><circle r="5" stroke="#c4c4c4" stroke-width="1" stroke-dasharray="1.200 1"/><circle r="2.800" fill="#cacaca"/></g>
<!-- 12 graphic styles -->
<g transform="translate(627.500,240.500) scale(0.88)" stroke="#c4c4c4" stroke-width="1"><rect x="-2.500" y="-5" width="7.500" height="7.500" rx="1"/><rect x="-5.500" y="-1.500" width="6" height="6" fill="#777"/></g>
<!-- 13 A| -->
<text x="626.500" y="261" font-family="Liberation Sans,sans-serif" font-size="12" fill="#cacaca" text-anchor="middle">A</text>
<rect x="632" y="251" width="1" height="11" fill="#cacaca"/>
<!-- 14 layers -->
<g transform="translate(627.500,278) scale(0.88)"><path d="M0-5l6 3-6 3-6-3z" fill="#e0e0e0"/><path d="M-6 1l6 3 6-3" stroke="#cacaca" stroke-width="1.300"/><path d="M-6 3.500l6 3 6-3" stroke="#bdbdbd" stroke-width="1.100"/></g>
<!-- 15 artboards -->
<g transform="translate(627.500,293.500) scale(0.88)" stroke="#c4c4c4" stroke-width="1"><rect x="-5.500" y="-5.500" width="7.500" height="7.500"/><rect x="-2" y="-2" width="7.500" height="7.500" fill="#555"/></g>
<!-- 16 transform -->
<g transform="translate(627.500,309) scale(0.88)"><rect x="-4" y="-4" width="8" height="8" stroke="#c4c4c4" stroke-width="1" stroke-dasharray="1.500 1.200"/><path d="M-5.500-5.500h2.500v2.500h-2.500zM3-5.500h2.500v2.500h-2.500zM-5.500 3h2.500v2.500h-2.500zM3 3h2.500v2.500h-2.500z" fill="#e0e0e0"/></g>
<!-- 17 align -->
<g transform="translate(627.500,324.500) scale(0.88)" fill="#cacaca"><rect x="-5" y="-5.500" width="1" height="11"/><rect x="-3" y="-4" width="5" height="3"/><rect x="-3" y="1" width="8" height="3"/></g>
<!-- 18 pathfinder -->
<g transform="translate(627.500,340) scale(0.88)"><rect x="-5" y="-5" width="6.500" height="6.500" fill="#cacaca"/><rect x="-1.500" y="-1.500" width="6.500" height="6.500" fill="#8a8a8a" stroke="#ddd" stroke-width="0.800"/></g>
</svg>

<!-- LOGO -->
<div class="a" style="left:0;top:427px;width:60px;height:58px;background:linear-gradient(90deg,#3a2b21 0,#38271c 22px,#2c1507 23px,#2e1606 100%);border:2.7px solid #f7941d"></div>
<div class="a" style="left:27px;top:469px;width:22px;height:12px;background:#3a2110;opacity:.7"></div>
<div class="t" style="transform:scaleX(0.800);transform-origin:0 0;left:13.3px;top:435.3px;font-size:39px;font-weight:bold;color:#f7941d">Ai</div>

</body>
</html>
